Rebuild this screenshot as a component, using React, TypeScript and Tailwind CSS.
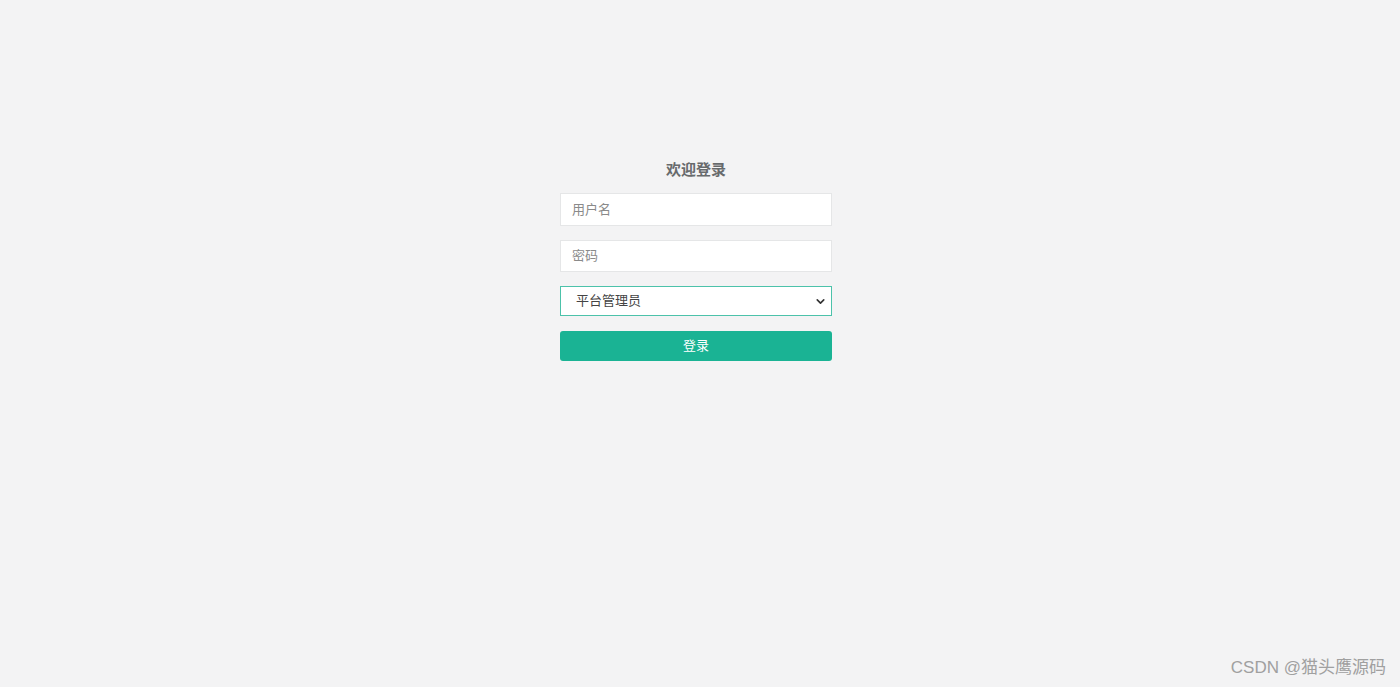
import { ChevronDown } from "lucide-react";

const font = { fontFamily: '"Liberation Sans", "Noto Sans CJK SC", sans-serif' };

const App = () => {
  return (
    <div className="relative h-[687px] w-full bg-[#f3f3f4] overflow-hidden" style={font}>
      <div className="flex flex-col items-center pt-[160px] pr-[8px]">
        <div className="w-[272px] flex flex-col">
          <h3 className="text-center text-[15px] font-bold text-[#676a6c] leading-[20px] mb-[13px]">欢迎登录</h3>

          <div className="h-[33px] bg-white border border-[#e5e6e7] flex items-center px-[11px] text-[13px] text-[#8a8a8a] mb-[14px]">
            用户名
          </div>

          <div className="h-[32px] bg-white border border-[#e5e6e7] flex items-center px-[11px] text-[13px] text-[#8a8a8a] mb-[14px]">
            密码
          </div>

          <div className="h-[30px] bg-white border border-[#4cc2aa] flex items-center justify-between pl-[15px] pr-[4px] text-[13px] text-[#444] mb-[15px]">
            <span>平台管理员</span>
            <ChevronDown className="w-[13px] h-[13px] text-[#333]" strokeWidth={3} />
          </div>

          <button className="h-[30px] bg-[#1ab394] rounded-[3px] text-white text-[13px] flex items-center justify-center">
            登录
          </button>
        </div>
      </div>

      <div className="absolute right-[14px] bottom-[7px] text-[17px] text-[#a0a0a0]">CSDN @猫头鹰源码</div>
    </div>
  );
};

export default App;
